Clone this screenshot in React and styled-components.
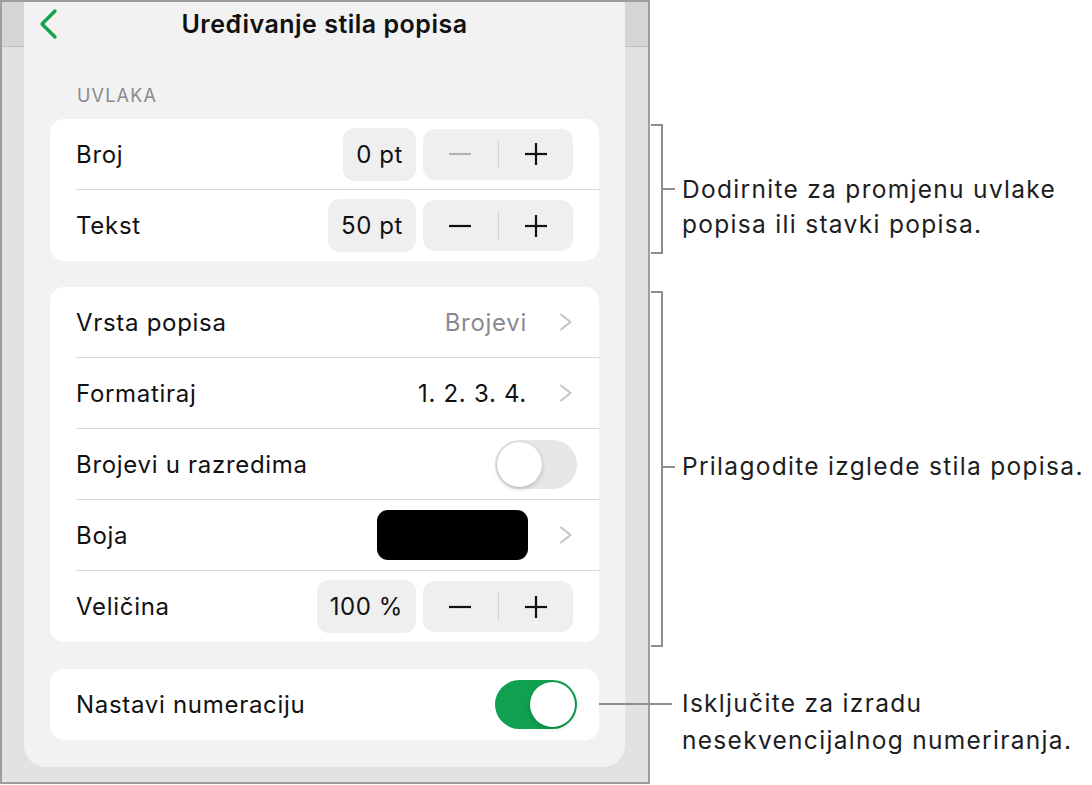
import React from "react";
import styled, { createGlobalStyle } from "styled-components";

// --- Global ---
const GlobalStyle = createGlobalStyle`
  html, body {
    margin: 0;
    padding: 0;
    background: #ffffff;
  }
  body {
    font-family: Inter, "Noto Sans", "Liberation Sans", sans-serif;
    -webkit-font-smoothing: antialiased;
  }
`;

// --- Styled Components ---
const Page = styled.div`
  display: flex;
  align-items: flex-start;
  width: 1092px;
  height: 785px;
  overflow: hidden;
`;

const Device = styled.div`
  box-sizing: border-box;
  width: 650px;
  height: 784px;
  flex-shrink: 0;
  border: 2px solid #9d9d9d;
  padding: 0 23px 0 22px;
  background: linear-gradient(
    to bottom,
    #d5d5d5 0,
    #d5d5d5 44px,
    #bfbfbf 44px,
    #bfbfbf 45px,
    #e2e2e2 45px
  );
`;

const Sheet = styled.div`
  display: flex;
  flex-direction: column;
  background: #f2f2f2;
  border-radius: 0 0 22px 22px;
  padding: 0 26px 27px;
`;

const Header = styled.div`
  display: grid;
  grid-template-columns: 1fr auto 1fr;
  align-items: center;
  height: 44px;
  margin: 0 -26px;
`;

const BackButton = styled.button`
  justify-self: start;
  display: flex;
  align-items: center;
  border: 0;
  background: none;
  padding: 0 0 0 14px;
  cursor: pointer;
`;

const Title = styled.h1`
  margin: 0;
  font-size: 25px;
  font-weight: 600;
  letter-spacing: 0.5px;
  color: #111;
`;

const SectionLabel = styled.div`
  margin: 38px 0 11px 27px;
  font-size: 18px;
  line-height: 24px;
  letter-spacing: 1.2px;
  color: #8a8a8e;
`;

const Card = styled.div`
  background: #ffffff;
  border-radius: 14px;
  margin-top: ${(p) => p.$gap || 0}px;
`;

const Row = styled.div`
  box-sizing: border-box;
  display: flex;
  align-items: center;
  justify-content: space-between;
  height: 71px;
  margin-left: 26px;
  padding-right: 26px;
  border-bottom: 1px solid #d9d9dc;

  &:last-child {
    border-bottom: none;
  }
`;

const Label = styled.span`
  font-size: 24px;
  letter-spacing: 0.7px;
  color: #111;
`;

const Controls = styled.div`
  display: flex;
  align-items: center;
  gap: ${(p) => p.$gap || 7}px;
`;

const ValuePill = styled.div`
  box-sizing: border-box;
  height: 53px;
  padding: 0 13px;
  display: flex;
  align-items: center;
  border-radius: 12px;
  background: #efeff0;
  font-size: 24px;
  letter-spacing: 0.6px;
  color: #111;
`;

const Stepper = styled.div`
  display: flex;
  align-items: center;
  width: 150px;
  height: 51px;
  border-radius: 12px;
  background: #efeff0;
`;

const StepButton = styled.button`
  flex: 1;
  height: 100%;
  display: flex;
  align-items: center;
  justify-content: center;
  border: 0;
  background: none;
  padding: 0;
  color: ${(p) => (p.$disabled ? "#b3b3b6" : "#111")};
`;

const StepDivider = styled.div`
  width: 1px;
  height: 27px;
  background: #d2d2d4;
`;

const ValueText = styled.span`
  font-size: 24px;
  letter-spacing: 0.7px;
  color: ${(p) => (p.$muted ? "#8a8a8e" : "#111")};
`;

const Swatch = styled.div`
  width: 151px;
  height: 50px;
  border-radius: 11px;
  background: #000000;
`;

const Toggle = styled.div`
  box-sizing: border-box;
  display: flex;
  justify-content: ${(p) => (p.$on ? "flex-end" : "flex-start")};
  align-items: center;
  width: 82px;
  height: 49px;
  padding: 2px;
  margin-right: -4px;
  border-radius: 25px;
  background: ${(p) => (p.$on ? "#0fa14f" : "#e6e6e9")};
`;

const Knob = styled.div`
  width: 45px;
  height: 45px;
  border-radius: 50%;
  background: #ffffff;
  box-shadow: 0 2px 5px rgba(0, 0, 0, 0.18), 0 0 0 0.5px rgba(0, 0, 0, 0.06);
`;

// --- Callouts ---
const Notes = styled.div`
  display: flex;
  flex-direction: column;
  flex: 1;
  font-size: 24.5px;
  letter-spacing: 1.3px;
  color: #1d1d1f;
`;

const Callout = styled.div`
  display: flex;
  align-items: flex-start;
  margin-top: ${(p) => p.$gap}px;
`;

const Bracket = styled.div`
  box-sizing: border-box;
  flex-shrink: 0;
  width: 12px;
  height: ${(p) => p.$h}px;
  margin-left: 1px;
  border: 2px solid #8e8e8e;
  border-left: none;
`;

const Tick = styled.div`
  flex-shrink: 0;
  width: ${(p) => p.$w}px;
  height: 2px;
  margin-top: ${(p) => p.$top}px;
  margin-left: ${(p) => p.$left || 0}px;
  background: #8e8e8e;
`;

const NoteText = styled.p`
  margin: ${(p) => p.$top}px 0 0 ${(p) => p.$left}px;
  line-height: ${(p) => p.$lh || 35}px;
  white-space: nowrap;
`;

// --- Icons ---
const BackIcon = () => (
  <svg width="20" height="32" viewBox="0 0 20 32" fill="none">
    <polyline
      points="17,3 4,16 17,29"
      stroke="#13a350"
      strokeWidth="3.4"
      strokeLinecap="round"
      strokeLinejoin="round"
    />
  </svg>
);

const Chevron = () => (
  <svg width="14" height="20" viewBox="0 0 14 20" fill="none">
    <polyline
      points="2,2.5 11.5,10 2,17.5"
      stroke="#c4c4c7"
      strokeWidth="2"
      strokeLinecap="round"
      strokeLinejoin="round"
    />
  </svg>
);

const MinusIcon = () => (
  <svg width="24" height="24" viewBox="0 0 24 24" fill="none">
    <line x1="1" y1="12" x2="23" y2="12" stroke="currentColor" strokeWidth="2.2" />
  </svg>
);

const PlusIcon = () => (
  <svg width="24" height="24" viewBox="0 0 24 24" fill="none">
    <line x1="1" y1="12" x2="23" y2="12" stroke="currentColor" strokeWidth="2.2" />
    <line x1="12" y1="1" x2="12" y2="23" stroke="currentColor" strokeWidth="2.2" />
  </svg>
);

const StepperControl = ({ value, minusDisabled }) => (
  <Controls>
    <ValuePill>{value}</ValuePill>
    <Stepper>
      <StepButton $disabled={minusDisabled}>
        <MinusIcon />
      </StepButton>
      <StepDivider />
      <StepButton>
        <PlusIcon />
      </StepButton>
    </Stepper>
  </Controls>
);

const App = () => {
  return (
    <Page>
      <GlobalStyle />
      <Device>
        <Sheet>
          <Header>
            <BackButton aria-label="Natrag">
              <BackIcon />
            </BackButton>
            <Title>Uređivanje stila popisa</Title>
          </Header>

          <SectionLabel>UVLAKA</SectionLabel>
          <Card>
            <Row>
              <Label>Broj</Label>
              <StepperControl value="0 pt" minusDisabled />
            </Row>
            <Row>
              <Label>Tekst</Label>
              <StepperControl value="50 pt" />
            </Row>
          </Card>

          <Card $gap={26}>
            <Row>
              <Label>Vrsta popisa</Label>
              <Controls $gap={32}>
                <ValueText $muted>Brojevi</ValueText>
                <Chevron />
              </Controls>
            </Row>
            <Row>
              <Label>Formatiraj</Label>
              <Controls $gap={32}>
                <ValueText>1. 2. 3. 4.</ValueText>
                <Chevron />
              </Controls>
            </Row>
            <Row>
              <Label>Brojevi u razredima</Label>
              <Toggle>
                <Knob />
              </Toggle>
            </Row>
            <Row>
              <Label>Boja</Label>
              <Controls $gap={31}>
                <Swatch />
                <Chevron />
              </Controls>
            </Row>
            <Row>
              <Label>Veličina</Label>
              <StepperControl value="100 %" />
            </Row>
          </Card>

          <Card $gap={27}>
            <Row>
              <Label>Nastavi numeraciju</Label>
              <Toggle $on>
                <Knob />
              </Toggle>
            </Row>
          </Card>
        </Sheet>
      </Device>

      <Notes>
        <Callout $gap={124}>
          <Bracket $h={130} />
          <Tick $w={12} $top={64} />
          <NoteText $top={48} $left={7}>
            Dodirnite za promjenu uvlake
            <br />
            popisa ili stavki popisa.
          </NoteText>
        </Callout>

        <Callout $gap={37}>
          <Bracket $h={356} />
          <Tick $w={12} $top={175} />
          <NoteText $top={158} $left={7}>
            Prilagodite izglede stila popisa.
          </NoteText>
        </Callout>

        <Callout $gap={38}>
          <Tick $w={73} $top={18} $left={-51} />
          <NoteText $top={0} $left={10} $lh={37}>
            Isključite za izradu
            <br />
            nesekvencijalnog numeriranja.
          </NoteText>
        </Callout>
      </Notes>
    </Page>
  );
};

export default App;
